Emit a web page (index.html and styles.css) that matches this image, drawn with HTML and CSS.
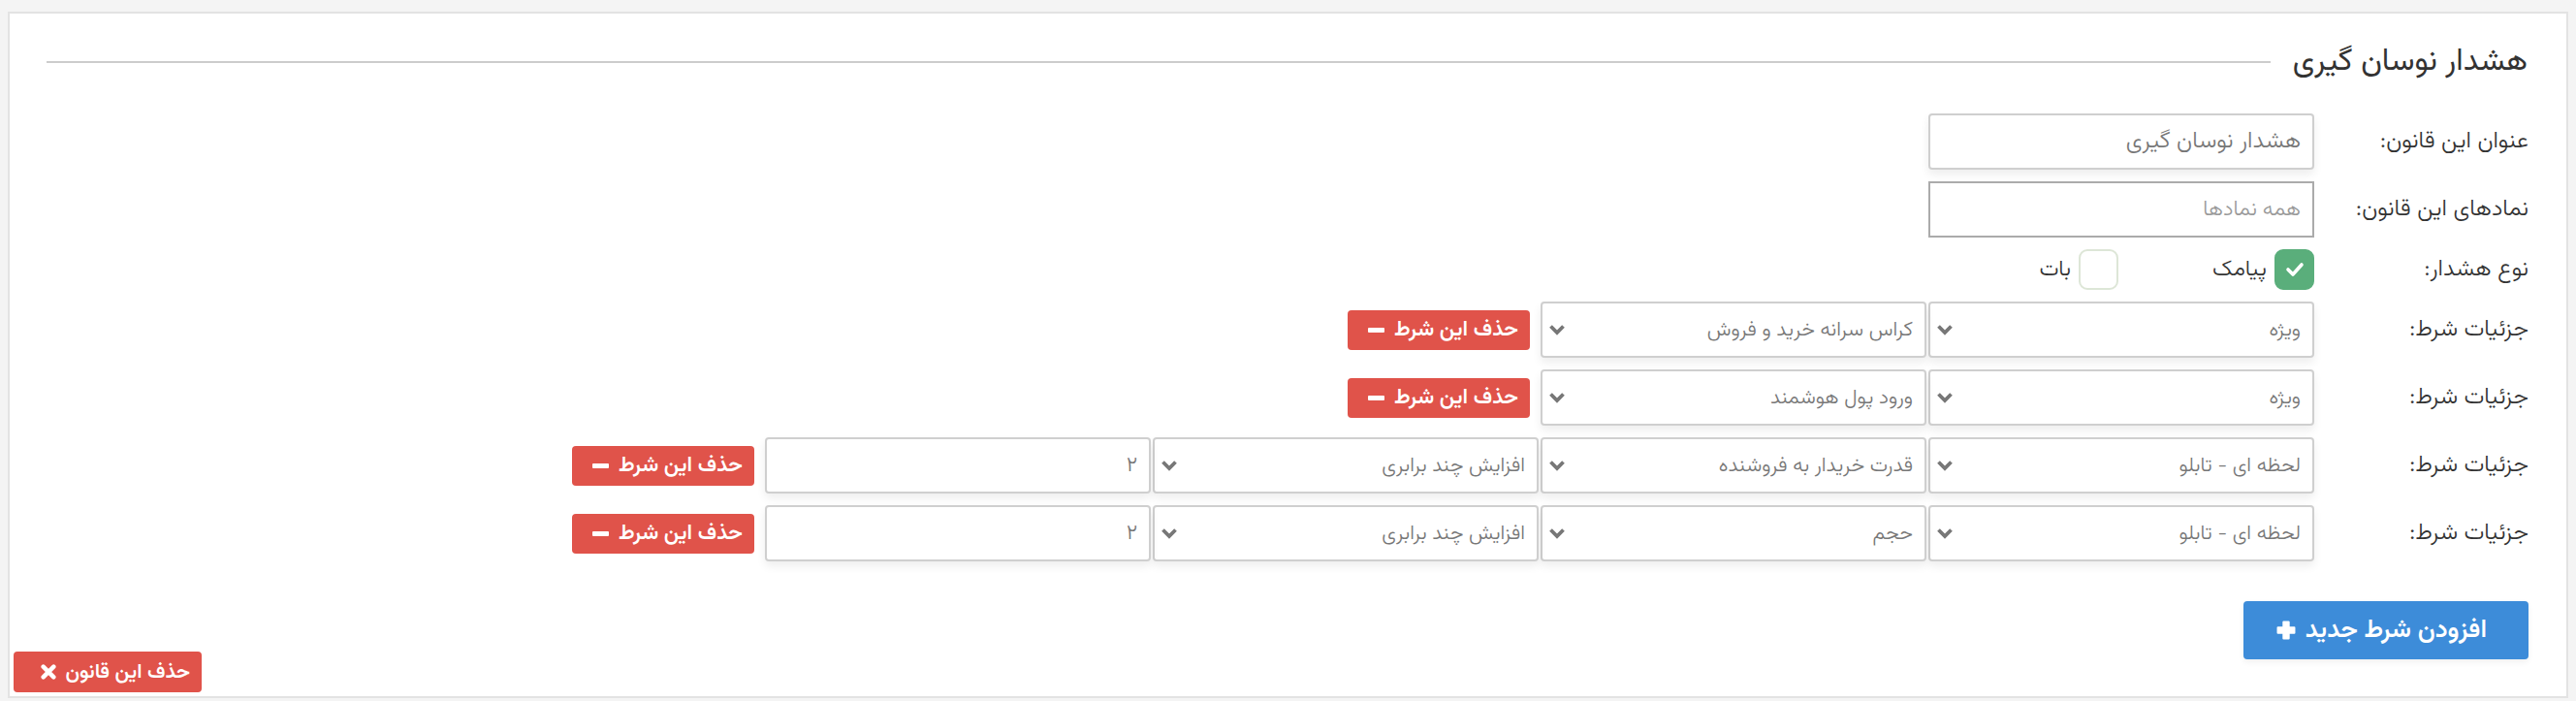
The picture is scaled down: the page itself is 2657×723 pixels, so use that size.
FILE: index.html
```html
<!DOCTYPE html>
<html lang="fa" dir="rtl">
<head>
<meta charset="utf-8">
<title>هشدار نوسان گیری</title>
<link rel="stylesheet" href="styles.css">
</head>
<body>
<div class="panel">
  <div class="panel-head">
    <h3 class="title">هشدار نوسان گیری</h3>
    <span class="rule"></span>
  </div>

  <div class="form">
    <div class="row">
      <label class="lbl">عنوان این قانون:</label>
      <div class="fields">
        <input class="field input input-val" type="text" value="هشدار نوسان گیری">
      </div>
    </div>

    <div class="row">
      <label class="lbl">نمادهای این قانون:</label>
      <div class="fields">
        <input class="field input input-flat" type="text" placeholder="همه نمادها">
      </div>
    </div>

    <div class="row row-check">
      <label class="lbl">نوع هشدار:</label>
      <div class="fields">
        <div class="option">
          <span class="box box-on"><svg width="20" height="16" viewBox="0 0 20 16"><polyline points="3,8 8,13 17,3" fill="none" stroke="#fff" stroke-width="3.6" stroke-linecap="round" stroke-linejoin="round"/></svg></span>
          <span class="opt-text">پیامک</span>
        </div>
        <div class="option">
          <span class="box"></span>
          <span class="opt-text">بات</span>
        </div>
      </div>
    </div>

    <div class="row">
      <label class="lbl">جزئیات شرط:</label>
      <div class="fields">
        <div class="field select"><span class="sel-text">ویژه</span><svg class="chev" width="18" height="12" viewBox="0 0 18 12"><polyline points="2.5,2.5 9,9 15.5,2.5" fill="none" stroke="#777" stroke-width="3.8"/></svg></div>
        <div class="field select"><span class="sel-text">کراس سرانه خرید و فروش</span><svg class="chev" width="18" height="12" viewBox="0 0 18 12"><polyline points="2.5,2.5 9,9 15.5,2.5" fill="none" stroke="#777" stroke-width="3.8"/></svg></div>
        <button class="btn btn-red btn-del">حذف این شرط<span class="ico-minus"></span></button>
      </div>
    </div>

    <div class="row">
      <label class="lbl">جزئیات شرط:</label>
      <div class="fields">
        <div class="field select"><span class="sel-text">ویژه</span><svg class="chev" width="18" height="12" viewBox="0 0 18 12"><polyline points="2.5,2.5 9,9 15.5,2.5" fill="none" stroke="#777" stroke-width="3.8"/></svg></div>
        <div class="field select"><span class="sel-text">ورود پول هوشمند</span><svg class="chev" width="18" height="12" viewBox="0 0 18 12"><polyline points="2.5,2.5 9,9 15.5,2.5" fill="none" stroke="#777" stroke-width="3.8"/></svg></div>
        <button class="btn btn-red btn-del">حذف این شرط<span class="ico-minus"></span></button>
      </div>
    </div>

    <div class="row">
      <label class="lbl">جزئیات شرط:</label>
      <div class="fields">
        <div class="field select"><span class="sel-text">لحظه ای - تابلو</span><svg class="chev" width="18" height="12" viewBox="0 0 18 12"><polyline points="2.5,2.5 9,9 15.5,2.5" fill="none" stroke="#777" stroke-width="3.8"/></svg></div>
        <div class="field select"><span class="sel-text">قدرت خریدار به فروشنده</span><svg class="chev" width="18" height="12" viewBox="0 0 18 12"><polyline points="2.5,2.5 9,9 15.5,2.5" fill="none" stroke="#777" stroke-width="3.8"/></svg></div>
        <div class="field select"><span class="sel-text">افزایش چند برابری</span><svg class="chev" width="18" height="12" viewBox="0 0 18 12"><polyline points="2.5,2.5 9,9 15.5,2.5" fill="none" stroke="#777" stroke-width="3.8"/></svg></div>
        <input class="field input" type="text" value="۲">
        <button class="btn btn-red btn-del">حذف این شرط<span class="ico-minus"></span></button>
      </div>
    </div>

    <div class="row">
      <label class="lbl">جزئیات شرط:</label>
      <div class="fields">
        <div class="field select"><span class="sel-text">لحظه ای - تابلو</span><svg class="chev" width="18" height="12" viewBox="0 0 18 12"><polyline points="2.5,2.5 9,9 15.5,2.5" fill="none" stroke="#777" stroke-width="3.8"/></svg></div>
        <div class="field select"><span class="sel-text">حجم</span><svg class="chev" width="18" height="12" viewBox="0 0 18 12"><polyline points="2.5,2.5 9,9 15.5,2.5" fill="none" stroke="#777" stroke-width="3.8"/></svg></div>
        <div class="field select"><span class="sel-text">افزایش چند برابری</span><svg class="chev" width="18" height="12" viewBox="0 0 18 12"><polyline points="2.5,2.5 9,9 15.5,2.5" fill="none" stroke="#777" stroke-width="3.8"/></svg></div>
        <input class="field input" type="text" value="۲">
        <button class="btn btn-red btn-del">حذف این شرط<span class="ico-minus"></span></button>
      </div>
    </div>
  </div>

  <div class="footer">
    <button class="btn btn-blue btn-add">افزودن شرط جدید<svg class="ico-plus" width="20" height="20" viewBox="0 0 19 19"><path d="M7 0.5h5a1 1 0 0 1 1 1V6h4.5a1 1 0 0 1 1 1v5a1 1 0 0 1-1 1H13v4.5a1 1 0 0 1-1 1H7a1 1 0 0 1-1-1V13H1.5a1 1 0 0 1-1-1V7a1 1 0 0 1 1-1H6V1.5a1 1 0 0 1 1-1z" fill="#fff"/></svg></button>
    <button class="btn btn-red btn-rule">حذف این قانون<svg class="ico-x" width="16" height="16" viewBox="0 0 15 15"><path d="M2.5 2.5L12.5 12.5M12.5 2.5L2.5 12.5" stroke="#fff" stroke-width="4.2" stroke-linecap="round"/></svg></button>
  </div>
</div>
</body>
</html>
```

FILE: styles.css
```css
* { box-sizing: border-box; }

html, body {
  background: #f4f4f4;
}

body {
  margin: 12px 8px 3px 8px;
  font-family: "Vazirmatn", "Vazir", "Noto Sans Arabic", "DejaVu Sans", sans-serif;
  color: #333;
  direction: rtl;
}

.panel {
  background: #fff;
  border: 2px solid #e3e3e3;
  height: 708px;
  display: flex;
  flex-direction: column;
}

.panel-head {
  display: flex;
  align-items: center;
  gap: 23px;
  margin-top: 30px;
  padding: 0 40px 0 38px;
  height: 40px;
}

.title {
  margin: 0;
  font-size: 32px;
  font-weight: normal;
  line-height: 40px;
  color: #333;
  white-space: nowrap;
}

.rule {
  flex: 1;
  height: 2px;
  background: #cccccc;
}

.form {
  margin-top: 33px;
  display: flex;
  flex-direction: column;
  gap: 12px;
}

.row {
  display: flex;
  align-items: center;
  height: 58px;
}

.row-check {
  height: 42px;
}

.lbl {
  width: 260px;
  flex: none;
  padding-right: 39px;
  font-size: 24px;
  font-weight: 300;
  color: #333;
  white-space: nowrap;
}

.fields {
  display: flex;
  align-items: center;
  gap: 2px;
  height: 100%;
}

.field {
  width: 398px;
  height: 58px;
  flex: none;
  border: 2px solid #cfcfcf;
  border-radius: 4px;
  background: #fff;
  box-shadow: 0 5px 10px rgba(0, 0, 0, 0.07);
}

.input {
  font-family: inherit;
  font-size: 22px;
  font-weight: 300;
  color: #777;
  padding: 0 12px;
  direction: rtl;
  outline: none;
}

.input-val {
  font-size: 24px;
}

.input-flat {
  border-color: #ababab;
  border-radius: 0;
  box-shadow: none;
}

.input-flat::placeholder {
  color: #9a9a9a;
}

.select {
  display: flex;
  align-items: center;
  justify-content: space-between;
  padding: 0 12px 0 6px;
}

.sel-text {
  font-size: 21px;
  font-weight: 300;
  color: #777;
  white-space: nowrap;
}

.chev {
  flex: none;
}

.option {
  width: 200px;
  display: flex;
  align-items: center;
  gap: 8px;
}

.box {
  width: 41px;
  height: 42px;
  border-radius: 9px;
  border: 2px solid #dde6d7;
  background: #fff;
  display: flex;
  align-items: center;
  justify-content: center;
  flex: none;
}

.box-on {
  background: #5aae7b;
  border-color: #5aae7b;
}

.opt-text {
  font-size: 23px;
  font-weight: 300;
  color: #333;
}

.btn {
  font-family: inherit;
  border: none;
  color: #fff;
  font-weight: 600;
  border-radius: 4px;
  display: flex;
  align-items: center;
  white-space: nowrap;
  direction: rtl;
  cursor: pointer;
}

.btn-red {
  background: #e0534a;
}

.btn-blue {
  background: #3d8cd9;
}

.btn-del {
  width: 188px;
  height: 41px;
  margin-right: 9px;
  padding: 0 12px 0 0;
  font-size: 22px;
  gap: 10px;
}

.ico-minus {
  width: 17px;
  height: 5px;
  background: #fff;
  border-radius: 1px;
}

.footer {
  margin-top: 41px;
  height: 94px;
  display: flex;
  justify-content: space-between;
  align-items: flex-start;
  padding: 0 39px 0 4px;
}

.btn-add {
  width: 294px;
  height: 60px;
  font-size: 26px;
  padding: 0 43px 0 0;
  gap: 10px;
  box-shadow: 0 3px 6px rgba(0, 0, 0, 0.06);
}

.btn-rule {
  align-self: flex-end;
  width: 194px;
  height: 42px;
  font-size: 21px;
  padding: 0 12px 0 0;
  gap: 10px;
}
```
